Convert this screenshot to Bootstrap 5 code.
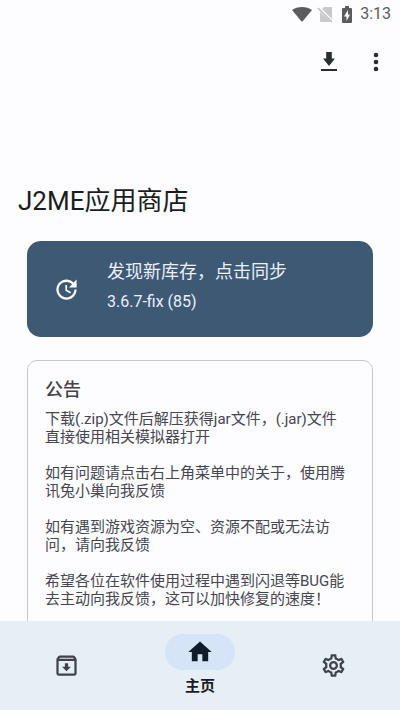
<!DOCTYPE html>
<html lang="zh-CN">
<head>
<meta charset="utf-8">
<meta name="viewport" content="width=device-width, initial-scale=1">
<title>J2ME应用商店</title>
<link href="https://cdn.jsdelivr.net/npm/bootstrap@5.3.0/dist/css/bootstrap.min.css" rel="stylesheet">
<style>
  body { font-family: Roboto, "Noto Sans CJK SC", sans-serif; background: #fdfcff; color: #1a1c1e; }
  svg { display: block; fill: currentColor; }
  .status-bar { height: 28px; padding-right: 9px; color: #5c5c5e; font-size: 16px; line-height: 28px; }
  .tool-bar { height: 68px; padding-right: 12px; gap: 23px; }
  .icon-btn { color: #2b2c30; }
  .page-title { font-size: 26px; line-height: 36px; margin: 87px 18px 22px; }
  .panel-list { padding: 0 27px; gap: 23px; }
  .sync-card { background: #3d5974; color: #e9f0fa; border-radius: 14px; height: 96px; padding: 0 26px; gap: 27px; }
  .sync-text { padding-bottom: 4px; }
  .sync-title { font-size: 18px; line-height: 28px; }
  .sync-version { font-size: 16px; line-height: 28px; margin-top: 2px; }
  .notice-card { background: #fdfcff; border: 1px solid #c6c7cd; border-radius: 10px; padding: 16px 17px 32px; color: #46464f; }
  .notice-title { font-size: 18px; line-height: 26px; margin-bottom: 7px; color: #44434c; }
  .notice-text { font-size: 15px; line-height: 18px; margin-bottom: 18px; }
  .bottom-nav { background: #e6eff6; height: 89px; }
  .bottom-nav a { color: #41434b; }
  .bottom-nav a.active { color: #0f1d2a; }
  .nav-pill { background: #d6e4f7; width: 70px; height: 36px; }
  .nav-label { font-size: 15px; line-height: 22px; margin-top: 5px; color: #1a1c1e; }
</style>
</head>
<body>
<div class="d-flex flex-column vh-100 overflow-hidden">
  <div class="status-bar d-flex align-items-center justify-content-end flex-shrink-0">
    <svg width="20" height="15" viewBox="0 0 20 15" aria-hidden="true"><path d="M10 15 0 3C2.800 1 6.200 0 10 0s7.200 1 10 3z"/></svg>
    <svg class="ms-1" width="18" height="17" viewBox="0 0 18 17" aria-hidden="true"><path fill="#c9c9cb" d="M8 1h7q1 0 1 1v11L6 3zM4 6l11 10H5q-1 0-1-1z"/><path d="M2 2 16 16" stroke="#bcbcbe" stroke-width="1.500"/></svg>
    <svg class="ms-2" width="10" height="17" viewBox="0 0 10 17" aria-hidden="true"><path fill-rule="evenodd" d="M3 0h4v2h2q1 0 1 1v13q0 1-1 1H1q-1 0-1-1V3q0-1 1-1h2zM6 4 2 10.500h2.500V15L8 8.500H6z"/></svg>
    <span class="ms-2">3:13</span>
  </div>
  <header class="tool-bar d-flex align-items-center justify-content-end flex-shrink-0">
    <button type="button" class="icon-btn btn p-0 border-0" aria-label="下载">
      <svg width="24" height="24" viewBox="0 0 24 24"><path d="M9.200 2h5.600v6.500H18l-6 7.500-6-7.500h3.200zM4 19h16v2H4z"/></svg>
    </button>
    <button type="button" class="icon-btn btn p-0 border-0" aria-label="更多">
      <svg width="24" height="24" viewBox="0 0 24 24"><circle cx="12" cy="5" r="2.300"/><circle cx="12" cy="12" r="2.300"/><circle cx="12" cy="19" r="2.300"/></svg>
    </button>
  </header>
  <main class="flex-grow-1 overflow-hidden d-flex flex-column">
    <h1 class="page-title fw-normal">J2ME应用商店</h1>
    <div class="panel-list d-flex flex-column">
      <button type="button" class="sync-card btn border-0 d-flex align-items-center text-start flex-shrink-0">
        <svg width="27" height="27" viewBox="0 0 24 24" aria-hidden="true"><path fill="#fff" d="M21 10.120h-6.780l2.740-2.820c-2.730-2.700-7.150-2.800-9.880-.1-2.730 2.710-2.730 7.080 0 9.790s7.150 2.710 9.880 0C18.320 15.650 19 14.080 19 12.100h2c0 1.980-.88 4.550-2.640 6.290-3.510 3.480-9.210 3.480-12.720 0-3.500-3.470-3.530-9.110-.02-12.580s9.140-3.470 12.650 0L21 3v7.120zM12.500 8v4.250l3.500 2.080-.72 1.210L11 13V8h1.500z"/></svg>
        <span class="sync-text d-flex flex-column">
          <span class="sync-title">发现新库存，点击同步</span>
          <span class="sync-version">3.6.7-fix (85)</span>
        </span>
      </button>
      <section class="notice-card flex-shrink-0">
        <h2 class="notice-title fw-medium">公告</h2>
        <p class="notice-text">下载(.zip)文件后解压获得jar文件，(.jar)文件<br>直接使用相关模拟器打开</p>
        <p class="notice-text">如有问题请点击右上角菜单中的关于，使用腾讯兔小巢向我反馈</p>
        <p class="notice-text">如有遇到游戏资源为空、资源不配或无法访问，请向我反馈</p>
        <p class="notice-text">希望各位在软件使用过程中遇到闪退等BUG能<br>去主动向我反馈，这可以加快修复的速度！</p>
      </section>
    </div>
  </main>
  <nav class="bottom-nav row g-0 flex-shrink-0">
    <a href="#archive" class="col d-flex align-items-center justify-content-center" aria-label="存档">
      <svg width="27" height="27" viewBox="0 0 24 24"><path d="M20.540 5.230l-1.390-1.680C18.880 3.210 18.470 3 18 3H6c-.47 0-.88.21-1.160.55L3.460 5.230C3.170 5.570 3 6.020 3 6.500V19c0 1.100.9 2 2 2h14c1.100 0 2-.9 2-2V6.500c0-.48-.17-.93-.46-1.270zM6.240 5h11.520l.83 1H5.420l.82-1zM5 19V8h14v11H5zm8.450-9h-2.900v3H8l4 4 4-4h-2.550z"/></svg>
    </a>
    <a href="#home" class="active col d-flex flex-column align-items-center justify-content-center text-decoration-none" aria-current="page">
      <span class="nav-pill rounded-pill d-flex align-items-center justify-content-center">
        <svg width="28" height="28" viewBox="0 0 24 24" aria-hidden="true"><path d="M10 20v-6h4v6h5v-8h3L12 3 2 12h3v8z"/></svg>
      </span>
      <span class="nav-label fw-bold">主页</span>
    </a>
    <a href="#settings" class="col d-flex align-items-center justify-content-center" aria-label="设置">
      <svg width="27" height="27" viewBox="0 0 24 24"><path d="M19.430 12.980c.04-.32.07-.64.07-.98 0-.34-.03-.66-.07-.98l2.110-1.650c.19-.15.24-.42.12-.64l-2-3.460c-.09-.16-.26-.25-.44-.25-.06 0-.12.01-.17.03l-2.490 1c-.52-.4-1.080-.73-1.690-.98l-.38-2.650C14.460 2.180 14.250 2 14 2h-4c-.25 0-.46.18-.49.42l-.38 2.650c-.61.25-1.170.59-1.690.98l-2.490-1c-.06-.02-.12-.03-.18-.03-.17 0-.34.09-.43.25l-2 3.460c-.13.22-.07.49.12.64l2.110 1.650c-.04.32-.07.65-.07.98 0 .33.03.66.07.98l-2.110 1.650c-.19.15-.24.42-.12.64l2 3.460c.09.16.26.25.44.25.06 0 .12-.01.17-.03l2.490-1c.52.4 1.080.73 1.690.98l.38 2.650c.03.24.24.42.49.42h4c.25 0 .46-.18.49-.42l.38-2.650c.61-.25 1.170-.59 1.690-.98l2.490 1c.06.02.12.03.18.03.17 0 .34-.09.43-.25l2-3.460c.12-.22.07-.49-.12-.64l-2.110-1.650zm-1.980-1.710c.04.31.05.52.05.73 0 .21-.02.43-.05.73l-.14 1.130.89.7 1.080.84-.7 1.210-1.270-.51-1.040-.42-.9.68c-.43.32-.84.56-1.250.73l-1.060.43-.16 1.130-.2 1.350h-1.400l-.19-1.350-.16-1.130-1.060-.43c-.43-.18-.83-.41-1.230-.71l-.91-.7-1.060.43-1.270.51-.7-1.210 1.080-.84.89-.7-.14-1.130c-.03-.31-.05-.54-.05-.74s.02-.43.05-.73l.14-1.130-.89-.7-1.080-.84.7-1.210 1.270.51 1.040.42.9-.68c.43-.32.84-.56 1.250-.73l1.060-.43.16-1.130.2-1.350h1.390l.19 1.350.16 1.130 1.060.43c.43.18.83.41 1.230.71l.91.7 1.060-.43 1.270-.51.7 1.210-1.070.85-.89.7.14 1.130zM12 8c-2.210 0-4 1.790-4 4s1.790 4 4 4 4-1.790 4-4-1.790-4-4-4zm0 6c-1.100 0-2-.9-2-2s.9-2 2-2 2 .9 2 2-.9 2-2 2z"/></svg>
    </a>
  </nav>
</div>
<script src="https://cdn.jsdelivr.net/npm/bootstrap@5.3.0/dist/js/bootstrap.bundle.min.js"></script>
</body>
</html>
